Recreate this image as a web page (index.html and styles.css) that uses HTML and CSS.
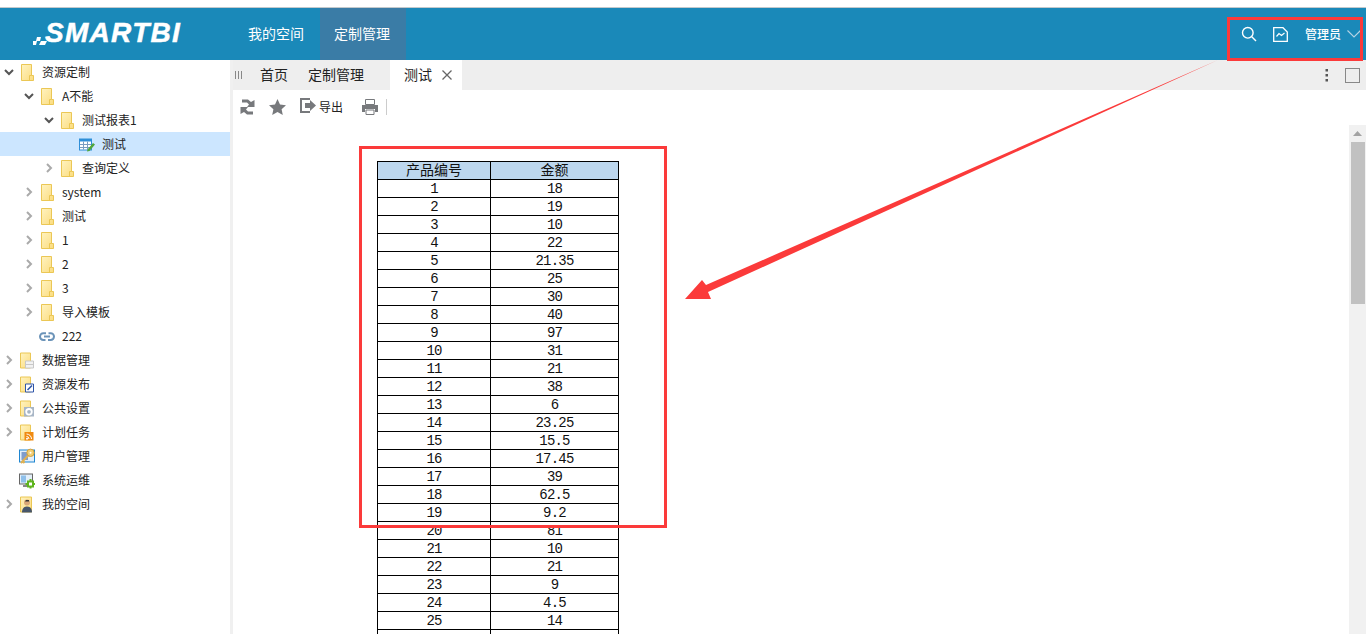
FILE: index.html
```html
<!DOCTYPE html>
<html lang="zh-CN">
<head>
<meta charset="utf-8">
<title>SMARTBI</title>
<link rel="stylesheet" href="styles.css">
</head>
<body>
<svg class="defs" width="0" height="0" aria-hidden="true">
  <defs>
    <linearGradient id="fg" x1="0" y1="0" x2="1" y2="1">
      <stop offset="0" stop-color="#fff3c0"/>
      <stop offset="1" stop-color="#fbdc7f"/>
    </linearGradient>
    <symbol id="folder" viewBox="0 0 14 17">
      <path d="M1.500 .5H11.500V11.500H13.500V16.500H1.500Z" fill="url(#fg)" stroke="#ebc755"/>
      <path d="M11.500 11.500H9.500V16.500" fill="none" stroke="#ebc755"/>
    </symbol>
    <symbol id="chev-d" viewBox="0 0 10 10"><path d="M1 3L5 7L9 3" fill="none" stroke="#555" stroke-width="2"/></symbol>
    <symbol id="chev-r" viewBox="0 0 10 10"><path d="M3 1L7 5L3 9" fill="none" stroke="#aaa" stroke-width="2"/></symbol>
  </defs>
</svg>

<header class="topbar">
  <div class="logo">
    <svg class="logo-mark" width="15" height="14" viewBox="0 0 15 14"><path d="M0 9h4l-1 4H0zM4 5h4L7 9H3zM8 9h6l-2 4H6z" fill="#fff"/></svg>
    <span class="logo-text">SMARTBI</span>
  </div>
  <nav class="nav">
    <a class="nav-item">我的空间</a>
    <a class="nav-item is-active">定制管理</a>
  </nav>
  <div class="user-tools">
    <svg class="tool-search" width="16" height="16" viewBox="0 0 16 16"><circle cx="6.800" cy="6.800" r="5.300" fill="none" stroke="#fff" stroke-width="1.400"/><path d="M10.800 10.800L15 15" stroke="#fff" stroke-width="1.400"/></svg>
    <svg width="15" height="15" viewBox="0 0 15 15"><path d="M.7.7H10L14.300 5V14.300H.7Z" fill="none" stroke="#fff" stroke-width="1.300"/><path d="M3.500 9.500L6 6.500L8.500 8.500L11.500 6" fill="none" stroke="#fff" stroke-width="1.200"/></svg>
    <span class="user-name">管理员</span>
    <svg class="user-chev" width="14" height="8" viewBox="0 0 14 8"><path d="M.5.5L7 7L13.500.5" fill="none" stroke="#b5d3e4" stroke-width="1.100"/></svg>
  </div>
</header>

<div class="workspace">
  <aside class="tree">
    <div class="row l0"><svg class="chev"><use href="#chev-d"/></svg><svg class="ico"><use href="#folder"/></svg><span>资源定制</span></div>
    <div class="row l1"><svg class="chev"><use href="#chev-d"/></svg><svg class="ico"><use href="#folder"/></svg><span>A不能</span></div>
    <div class="row l2"><svg class="chev"><use href="#chev-d"/></svg><svg class="ico"><use href="#folder"/></svg><span>测试报表1</span></div>
    <div class="row l3 is-selected"><i class="chev"></i>
      <svg class="ico" viewBox="0 0 16 16"><rect x=".5" y="2.500" width="12" height="11" fill="#fff" stroke="#2f8fd8"/><path d="M.5 2.500h12v2.500H.5z" fill="#2f8fd8"/><path d="M1 8h11M1 11h11M4.500 5v8M8.500 5v8" stroke="#7a9cc0"/><path d="M8.500 13L14 6.500L16 8L10.500 14.500L8 15Z" fill="#4fa63c"/></svg><span>测试</span></div>
    <div class="row l2"><svg class="chev"><use href="#chev-r"/></svg><svg class="ico"><use href="#folder"/></svg><span>查询定义</span></div>
    <div class="row l1"><svg class="chev"><use href="#chev-r"/></svg><svg class="ico"><use href="#folder"/></svg><span>system</span></div>
    <div class="row l1"><svg class="chev"><use href="#chev-r"/></svg><svg class="ico"><use href="#folder"/></svg><span>测试</span></div>
    <div class="row l1"><svg class="chev"><use href="#chev-r"/></svg><svg class="ico"><use href="#folder"/></svg><span>1</span></div>
    <div class="row l1"><svg class="chev"><use href="#chev-r"/></svg><svg class="ico"><use href="#folder"/></svg><span>2</span></div>
    <div class="row l1"><svg class="chev"><use href="#chev-r"/></svg><svg class="ico"><use href="#folder"/></svg><span>3</span></div>
    <div class="row l1"><svg class="chev"><use href="#chev-r"/></svg><svg class="ico"><use href="#folder"/></svg><span>导入模板</span></div>
    <div class="row l1"><i class="chev"></i><svg class="ico" viewBox="0 0 16 16"><path d="M7 4.800H4.300a3.300 3.300 0 0 0 0 6.600H6.500M9 11.400h2.700a3.300 3.300 0 0 0 0-6.600H9.500M5 8.100h6" fill="none" stroke="#6b93b8" stroke-width="2"/></svg><span>222</span></div>
    <div class="row l0"><svg class="chev"><use href="#chev-r"/></svg>
      <svg class="ico" viewBox="0 0 16 16"><path d="M1.500.5H11.500V15.500H1.500Z" fill="url(#fg)" stroke="#ebc755"/><path d="M6.500 8.500H14.500V15.500H6.500Z" fill="#f2f2f2" stroke="#c8c8c8"/><path d="M7 12H14" stroke="#c8c8c8"/></svg><span>数据管理</span></div>
    <div class="row l0"><svg class="chev"><use href="#chev-r"/></svg>
      <svg class="ico" viewBox="0 0 16 16"><path d="M1.500.5H11.500V15.500H1.500Z" fill="url(#fg)" stroke="#ebc755"/><path d="M6.500 7.500H14.500V15.500H6.500Z" fill="#fff" stroke="#2f55a8"/><path d="M8.500 13.500L13 9" stroke="#2f55a8" stroke-width="1.600"/></svg><span>资源发布</span></div>
    <div class="row l0"><svg class="chev"><use href="#chev-r"/></svg>
      <svg class="ico" viewBox="0 0 16 16"><path d="M1.500.5H11.500V15.500H1.500Z" fill="url(#fg)" stroke="#ebc755"/><rect x="5" y="6.500" width="10" height="9.500" fill="#a8b6c6"/><circle cx="10" cy="11.300" r="2.800" fill="none" stroke="#fff" stroke-width="1.800"/></svg><span>公共设置</span></div>
    <div class="row l0"><svg class="chev"><use href="#chev-r"/></svg>
      <svg class="ico" viewBox="0 0 16 16"><path d="M1.500.5H11.500V15.500H1.500Z" fill="url(#fg)" stroke="#ebc755"/><rect x="5.500" y="7.500" width="9" height="8.500" fill="#f08a10"/><path d="M7.500 9.500a5 5 0 0 1 5 5M7.500 12a2.500 2.500 0 0 1 2.500 2.500" fill="none" stroke="#fff"/><circle cx="8" cy="14.200" r="1" fill="#fff"/></svg><span>计划任务</span></div>
    <div class="row l0"><i class="chev"></i>
      <svg class="ico" viewBox="0 0 16 16"><rect x=".5" y="1.500" width="15" height="12" fill="#e4effa" stroke="#1f86d1"/><path d="M2.500 3.500h6.500v8H2.500z" fill="#7f9ccc"/><path d="M9.500 6.500L2 14.500M4 13l1.500 1.500" fill="none" stroke="#e0b050" stroke-width="2"/><circle cx="11.500" cy="4.300" r="3.700" fill="#f3cf74" stroke="#cfa040"/><circle cx="11.500" cy="4.300" r="1" fill="#fff"/></svg><span>用户管理</span></div>
    <div class="row l0"><i class="chev"></i>
      <svg class="ico" viewBox="0 0 16 16"><rect x=".5" y="1.500" width="13" height="10" fill="#e3eff9" stroke="#666"/><path d="M2 3h5v7H2z" fill="#8fc0ea"/><path d="M4 13.500h6" stroke="#888" stroke-width="2"/><path d="M8 8h7v7H8zM10.500 6.500h2V16h-2zM6.500 10.500H16v2H6.500z" fill="#5fb51e"/><rect x="10" y="10" width="3" height="3" fill="#fff"/></svg><span>系统运维</span></div>
    <div class="row l0"><svg class="chev"><use href="#chev-r"/></svg>
      <svg class="ico" viewBox="0 0 16 16"><path d="M1.500.5H12.500V15.500H1.500Z" fill="url(#fg)" stroke="#ebc755"/><circle cx="8" cy="6" r="3" fill="#d9a878"/><path d="M7 3.500h3V5H6z" fill="#333"/><path d="M3 16c0-4 2-6 5-6s5 2 5 6z" fill="#47566a"/></svg><span>我的空间</span></div>
  </aside>

  <main class="content">
    <div class="tabbar">
      <svg class="tab-grip" width="8" height="8" viewBox="0 0 8 8"><path d="M.5 0v8M3.500 0v8M6.500 0v8" stroke="#888"/></svg>
      <span class="tab tab-home">首页</span>
      <span class="tab tab-custom">定制管理</span>
      <span class="tab tab-active">测试
        <svg width="12" height="12" viewBox="0 0 12 12"><path d="M1.500 1.500l9 9M10.500 1.500l-9 9" stroke="#666" stroke-width="1.300"/></svg>
      </span>
      <span class="tab-tools">
        <svg width="4" height="15" viewBox="0 0 4 15"><path d="M.5 1h2.500v2.500H.5zM.5 6h2.500v2.500H.5zM.5 11h2.500v2.500H.5z" fill="#555"/></svg>
        <svg width="15" height="15" viewBox="0 0 15 15"><rect x=".5" y=".5" width="14" height="14" fill="none" stroke="#888"/></svg>
      </span>
    </div>
    <div class="toolbar">
      <svg class="t-refresh" width="15" height="16" viewBox="0 0 15 16"><path d="M2 .5H8L11 3L14.500 1V8H7L9 5.500L7 3.500H2Z" fill="#77797c"/><path d="M13 15.500H7L4 13L.5 15V8H8L6 10.500L8 12.500H13Z" fill="#77797c"/></svg>
      <svg class="t-star" width="17" height="16" viewBox="0 0 17 16"><path d="M8.500 0L11 5.500L17 6.200L12.600 10.200L13.800 16L8.500 13L3.200 16L4.400 10.200L0 6.200L6 5.500Z" fill="#77797c"/></svg>
      <svg class="t-export" width="16" height="15" viewBox="0 0 16 15"><path d="M10 1H1V14H10" fill="none" stroke="#77797c" stroke-width="2"/><path d="M5 5H10V2L16 7.500L10 13V10H5Z" fill="#77797c"/></svg>
      <span class="t-label">导出</span>
      <svg class="t-print" width="16" height="16" viewBox="0 0 16 16"><path d="M3.500.5h9v5h-9z" fill="#fff" stroke="#77797c"/><path d="M0 6h16v7h-3v-3H3v3H0z" fill="#77797c"/><path d="M4 11h8v4.500H4z" fill="#fff" stroke="#77797c"/></svg>
      <i class="t-sep"></i>
    </div>
    <div class="report">
      <div class="report-scroll">
        <table class="grid">
          <thead><tr><th>产品编号</th><th>金额</th></tr></thead>
          <tbody>
            <tr><td>1</td><td>18</td></tr>
            <tr><td>2</td><td>19</td></tr>
            <tr><td>3</td><td>10</td></tr>
            <tr><td>4</td><td>22</td></tr>
            <tr><td>5</td><td>21.35</td></tr>
            <tr><td>6</td><td>25</td></tr>
            <tr><td>7</td><td>30</td></tr>
            <tr><td>8</td><td>40</td></tr>
            <tr><td>9</td><td>97</td></tr>
            <tr><td>10</td><td>31</td></tr>
            <tr><td>11</td><td>21</td></tr>
            <tr><td>12</td><td>38</td></tr>
            <tr><td>13</td><td>6</td></tr>
            <tr><td>14</td><td>23.25</td></tr>
            <tr><td>15</td><td>15.5</td></tr>
            <tr><td>16</td><td>17.45</td></tr>
            <tr><td>17</td><td>39</td></tr>
            <tr><td>18</td><td>62.5</td></tr>
            <tr><td>19</td><td>9.2</td></tr>
            <tr><td>20</td><td>81</td></tr>
            <tr><td>21</td><td>10</td></tr>
            <tr><td>22</td><td>21</td></tr>
            <tr><td>23</td><td>9</td></tr>
            <tr><td>24</td><td>4.5</td></tr>
            <tr><td>25</td><td>14</td></tr>
            <tr><td>&nbsp;</td><td>&nbsp;</td></tr>
          </tbody>
        </table>
      </div>
      <div class="scrollbar">
        <svg class="sb-up" width="9" height="5" viewBox="0 0 9 5"><path d="M4.500 0L9 5H0Z" fill="#a3a3a3"/></svg>
        <div class="sb-thumb"></div>
      </div>
    </div>
  </main>
</div>

<div class="note-box note-user"></div>
<div class="note-box note-table"></div>
<svg class="note-arrow" width="1366" height="634" viewBox="0 0 1366 634" aria-hidden="true">
  <path d="M1218 60L706 285L702 280L685 299L711 299L708 292Z" fill="#fb3a3a"/>
</svg>
</body>
</html>
```
FILE: styles.css
```css
* { box-sizing: border-box; }
html, body { margin: 0; height: 100%; overflow: hidden; }
body {
  position: relative;
  height: 634px;
  background: #fff;
  font-family: "Noto Sans CJK SC", "Liberation Sans", sans-serif;
  font-size: 12px;
  color: #222;
  padding-top: 7px;
}
.defs { position: absolute; }

.topbar {
  height: 53px;
  display: flex;
  align-items: stretch;
  background: #1a89b9;
  border-top: 1px solid #c3c9cc;
  color: #fff;
}
.logo { width: 234px; flex: none; display: flex; align-items: center; padding: 0 0 3px 33px; }
.logo-mark { margin-top: 12px; flex: none; }
.logo-text {
  font: italic bold 28px/1 "Liberation Sans", sans-serif;
  margin-left: -3px;
  letter-spacing: 1.3px;
  -webkit-text-stroke: .5px #fff;
}
.nav { display: flex; gap: 2px; }
.nav-item {
  display: flex;
  align-items: center;
  padding: 0 14px 2px;
  font-size: 14px;
  line-height: 20px;
}
.nav-item.is-active { background: #3a7ca6; padding-right: 16px; }
.user-tools {
  margin-left: auto;
  display: flex;
  align-items: center;
  padding: 0 5px 0 0;
}
.tool-search { margin-right: 16px; }
.user-name { margin: 0 6px 2px 17px; font-size: 12px; font-weight: 500; }

.workspace { display: flex; height: 574px; }
.tree { width: 233px; flex: none; border-right: 3px solid #f0f0f0; }
.row { height: 24px; display: flex; align-items: center; font-size: 12px; color: #222; }
.row span { margin: -2px 0 0 1px; }
.row.l0 { padding-left: 4px; }
.row.l1 { padding-left: 24px; }
.row.l2 { padding-left: 44px; }
.row.l3 { padding-left: 64px; }
.row.is-selected { background: #cce6ff; }
.chev { width: 10px; height: 10px; flex: none; display: block; }
.ico { width: 16px; height: 17px; margin: 0 6px 0 5px; flex: none; display: block; }

.content { flex: 1; min-width: 0; display: flex; flex-direction: column; }
.tabbar {
  height: 30px;
  flex: none;
  display: flex;
  align-items: center;
  background: #eee;
  font-size: 14px;
  padding-left: 2px;
}
.tab-grip { flex: none; }
.tab { line-height: 20px; color: #222; padding-bottom: 2px; }
.tab-home { margin-left: 17px; }
.tab-custom { margin-left: 20px; }
.tab-active {
  margin-left: 26px;
  align-self: stretch;
  width: 72px;
  background: #fff;
  display: flex;
  align-items: center;
  padding-left: 14px;
  gap: 9px;
}
.tab-active svg { margin-top: 2px; }
.tab-tools { margin-left: auto; display: flex; align-items: center; gap: 16px; padding-right: 6px; }

.toolbar { height: 35px; flex: none; display: flex; align-items: center; padding: 0 0 2px 7px; }
.t-star { margin-left: 14px; }
.t-export { margin-left: 14px; margin-top: -2px; }
.t-label { margin-left: 3px; font-size: 12px; color: #222; }
.t-print { margin-left: 19px; }
.t-sep { width: 1px; height: 16px; background: #ccc; margin-left: 8px; }

.report { flex: 1; min-height: 0; display: flex; overflow: hidden; }
.report-scroll { flex: 1; min-width: 0; overflow: hidden; padding: 36px 0 0 144px; }
.grid { border-collapse: collapse; table-layout: fixed; width: 242px; }
.grid th, .grid td {
  height: 18px;
  padding: 0;
  border: 1px solid #000;
  text-align: center;
  color: #111;
}
.grid th:first-child, .grid td:first-child { width: 113px; }
.grid th {
  background: #bdd7ee;
  font-weight: 400;
  font-size: 14px;
  line-height: 14px;
  padding-bottom: 3px;
}
.grid td {
  font-family: "Liberation Mono", monospace;
  font-size: 14px;
  letter-spacing: -.8px;
  line-height: 16px;
  padding-top: 1px;
}

.scrollbar { width: 17px; flex: none; background: #f1f1f1; position: relative; padding-top: 6px; }
.sb-up { display: block; margin: 0 auto; }
.sb-thumb { width: 14px; height: 162px; margin: 6px 0 0 2px; background: #c1c1c1; }

.note-box { position: absolute; border: 3px solid #fb3a3a; }
.note-user { left: 1227px; top: 17px; width: 136px; height: 44px; }
.note-table { left: 359px; top: 146px; width: 308px; height: 382px; }
.note-arrow { position: absolute; left: 0; top: 0; pointer-events: none; }
```
